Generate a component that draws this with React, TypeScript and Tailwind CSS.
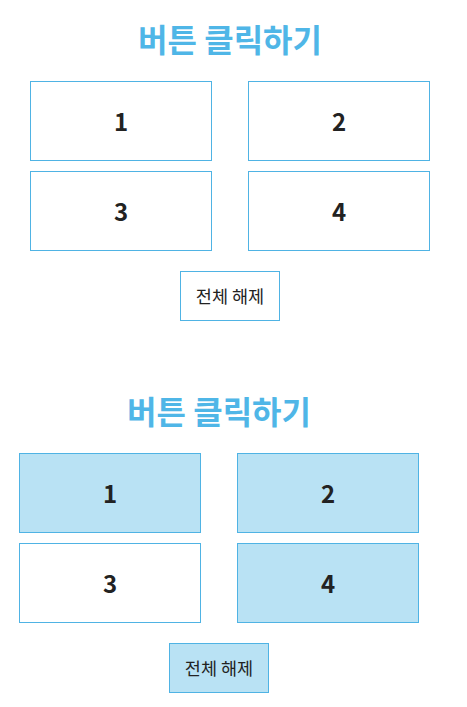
import { useState } from 'react';

interface ClickPanelProps {
  initial: number[];
  resetActive?: boolean;
  offsetClass: string;
}

const items = [1, 2, 3, 4];

function ClickPanel({ initial, resetActive = false, offsetClass }: ClickPanelProps) {
  const [selected, setSelected] = useState<number[]>(initial);

  const toggle = (n: number) => {
    setSelected(prev => (prev.includes(n) ? prev.filter(v => v !== n) : [...prev, n]));
  };

  return (
    <section className={`w-[400px] pt-4 ${offsetClass}`}>
      <h1 className="text-center text-[32px] font-bold leading-[44px] text-[#4fb6e7]">버튼 클릭하기</h1>
      <div className="mt-[21px] grid grid-cols-[182px_182px] gap-x-[36px] gap-y-[10px]">
        {items.map(n => (
          <button
            key={n}
            type="button"
            onClick={() => toggle(n)}
            className={`flex h-[80px] items-center justify-center border border-[#4fb3e4] text-[24px] font-bold text-[#222] ${
              selected.includes(n) ? 'bg-[#b9e2f4]' : 'bg-white'
            }`}
          >
            {n}
          </button>
        ))}
      </div>
      <div className="mt-5 flex justify-center">
        <button
          type="button"
          onClick={() => setSelected([])}
          className={`h-[50px] w-[100px] border border-[#4fb3e4] text-[17.5px] text-[#222] ${
            resetActive ? 'bg-[#b9e2f4]' : 'bg-white'
          }`}
        >
          전체 해제
        </button>
      </div>
    </section>
  );
}

export default function App() {
  return (
    <div className="min-h-[707px] bg-white font-['Noto_Sans_CJK_KR','Noto_Sans',sans-serif]">
      <ClickPanel initial={[]} offsetClass="ml-[30px]" />
      <div className="h-[51px]" />
      <ClickPanel initial={[1, 2, 4]} resetActive offsetClass="ml-[19px]" />
    </div>
  );
}
